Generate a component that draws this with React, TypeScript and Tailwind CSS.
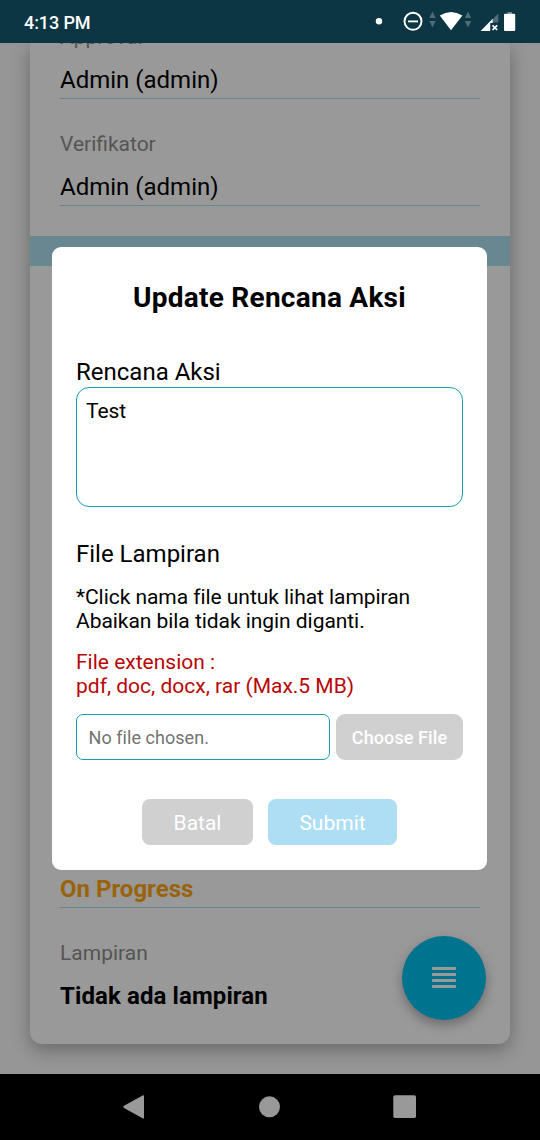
import type { ReactNode } from "react";

function StatusBar() {
  return (
    <header className="flex h-[43px] shrink-0 items-center justify-between bg-[#0d3644] pl-6 pr-[24px] text-white">
      <span className="pt-[2px] text-[18px] font-medium leading-[22px] tracking-[-0.1px]">4:13 PM</span>
      <svg width="141" height="43" viewBox="375 0 141 43" fill="#fff">
        <circle cx="379" cy="21.3" r="3.2" />
        <circle cx="413" cy="21.3" r="8.5" fill="none" stroke="#fff" strokeWidth="1.9" />
        <path d="M408 20.5h10v1.8h-10z" />
        <g fill="#4d6d78">
          <path d="M432.500 11.500l3.200 6.500h-6.400zM432.500 27.500l3.200-6.500h-6.400z" />
          <path d="M468 11.500l3.200 6.500h-6.400zM468 27.500l3.200-6.500h-6.400z" />
          <path d="M492.500 19.500L498.300 13.400v9h-5.800z" />
        </g>
        <path d="M439.800 15.500Q451 8.500 462.400 15.500L451 30.300z" />
        <path d="M480.600 31L492.700 18.700v4.300h-2.500v8z" />
        <path d="M492.500 25.300l4.700 4.700M497.200 25.300l-4.700 4.700" stroke="#fff" strokeWidth="1.700" />
        <path d="M507.500 12h4.500v2h-4.500z" fill="#6d8790" />
        <rect x="504" y="13.700" width="11.200" height="17.300" rx="1" />
      </svg>
    </header>
  );
}

function Field({ label, children }: { label: string; children: ReactNode }) {
  return (
    <div className="h-[76px] border-b border-[#628894]">
      <div className="text-[21px] leading-7 text-[#555]">{label}</div>
      <div className="mt-[15px] text-[24px] leading-7 text-black">{children}</div>
    </div>
  );
}

function DetailCard() {
  return (
    <section className="mx-[30px] flex h-[1001px] flex-col rounded-b-[12px] bg-[#999] shadow-[0_6px_18px_rgba(0,0,0,0.3)]">
      <div className="-mt-5 flex flex-col gap-[31px] px-[30px]">
        <Field label="Approval">Admin (admin)</Field>
        <Field label="Verifikator">Admin (admin)</Field>
      </div>
      <div className="mt-[30px] h-[30px] bg-[#698791]" />
      <div className="mt-auto px-[30px] pb-[34px]">
        <div className="border-b border-[#628894] pb-[4px] text-[24px] font-bold leading-7 text-[#996309]">
          On Progress
        </div>
        <div className="mt-[31px] text-[21px] leading-7 text-[#555]">Lampiran</div>
        <div className="mt-[15px] text-[24px] font-bold leading-7 tracking-[0.1px] text-black">Tidak ada lampiran</div>
      </div>
    </section>
  );
}

function MenuButton() {
  return (
    <button className="absolute bottom-[54px] right-[54px] flex size-[84px] items-center justify-center rounded-full bg-[#00738f] shadow-[0_5px_12px_rgba(0,0,0,0.3)]">
      <svg width="24" height="22" viewBox="0 0 24 22" fill="#999">
        <rect y="0" width="24" height="3" rx="0.8" />
        <rect y="6" width="24" height="3" rx="0.8" />
        <rect y="12" width="24" height="3" rx="0.8" />
        <rect y="18" width="24" height="3" rx="0.8" />
      </svg>
    </button>
  );
}

function UpdateDialog() {
  return (
    <div className="absolute inset-0 flex items-center pl-[52px]">
      <div className="flex h-[623px] w-[435px] flex-col rounded-[9px] bg-white px-6 text-black">
        <h1 className="mt-[35px] text-center text-[28px] font-bold leading-8 tracking-[0.25px]">Update Rencana Aksi</h1>
        <label className="mt-[43px] text-[24px] leading-[30px]">Rencana Aksi</label>
        <div className="h-[120px] rounded-[13px] border border-[#189faf] px-[9px] pt-[11px] text-[21px] leading-[25px] tracking-[-0.1px]">
          Test
        </div>
        <div className="mt-[32px] text-[24px] leading-[30px]">File Lampiran</div>
        <p className="mt-[16px] text-[21px] leading-[24px] tracking-[-0.05px] [font-variant-ligatures:common-ligatures]">
          *Click nama file untuk lihat lampiran
          <br />
          Abaikan bila tidak ingin diganti.
        </p>
        <p className="mt-[17px] text-[21px] leading-[24px] text-[#b90608]">
          File extension :<br />
          pdf, doc, docx, rar (Max.5 MB)
        </p>
        <div className="mt-[16px] flex h-[46px] shrink-0 gap-[6px]">
          <div className="flex w-[254px] items-center rounded-[7px] border border-[#189faf] pl-[11.500px] pt-[1px] text-[18px] tracking-[0.05px] text-[#737373] [font-variant-ligatures:common-ligatures]">
            No file chosen.
          </div>
          <button className="w-[127px] rounded-[9px] bg-[#d0d0d0] pt-[1px] text-[18px] font-medium tracking-[0.1px] text-white">
            Choose File
          </button>
        </div>
        <div className="mt-[39px] flex h-[46px] shrink-0 justify-center gap-[15px]">
          <button className="w-[111px] rounded-[8px] bg-[#d0d0d0] pt-[4px] text-[21px] text-white">Batal</button>
          <button className="w-[129px] rounded-[8px] bg-[#aedef4] pt-[4px] text-[21px] text-white">Submit</button>
        </div>
      </div>
    </div>
  );
}

function NavigationBar() {
  return (
    <nav className="flex h-[66px] shrink-0 items-center justify-center bg-black">
      <svg width="296" height="26" viewBox="122 1094 296 26" fill="#999">
        <path d="M143 1095.300L124 1105.700q-1.800 1.100 0 2.200L143 1118.500q1 .4 1-.8V1096q0-1.200-1-.7z" />
        <circle cx="269.500" cy="1106.800" r="10.500" />
        <rect x="393.300" y="1095.300" width="22.700" height="22.700" rx="1.800" />
      </svg>
    </nav>
  );
}

export default function App() {
  return (
    <div className="flex h-[1140px] w-[540px] flex-col overflow-hidden bg-[#969696] font-['Roboto',sans-serif]">
      <StatusBar />
      <main className="relative h-[1031px] shrink-0 overflow-hidden">
        <DetailCard />
        <MenuButton />
        <UpdateDialog />
      </main>
      <NavigationBar />
    </div>
  );
}
